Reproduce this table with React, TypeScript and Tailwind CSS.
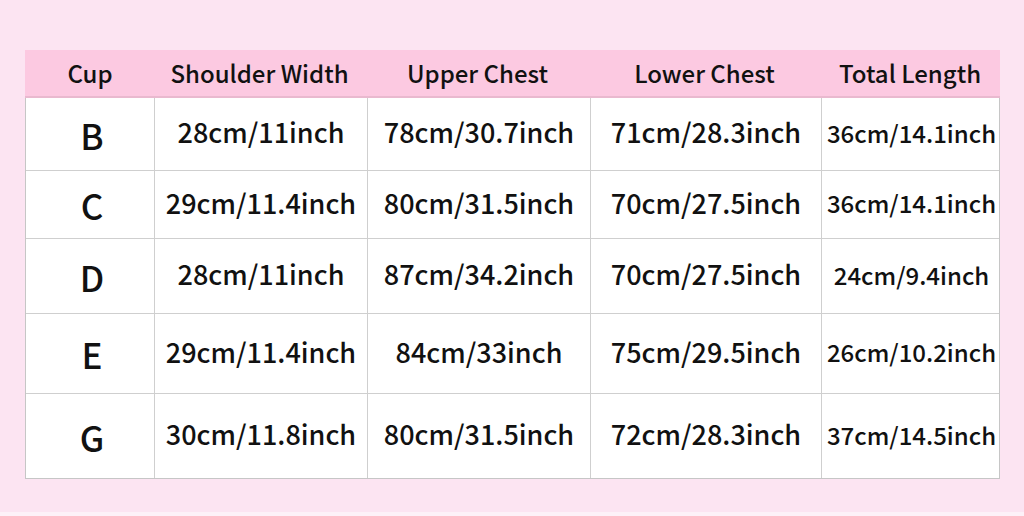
const headers = ["Cup", "Shoulder Width", "Upper Chest", "Lower Chest", "Total Length"];

const rows = [
  { h: "h-[72px]", cells: ["B", "28cm/11inch", "78cm/30.7inch", "71cm/28.3inch", "36cm/14.1inch"] },
  { h: "h-[68px]", cells: ["C", "29cm/11.4inch", "80cm/31.5inch", "70cm/27.5inch", "36cm/14.1inch"] },
  { h: "h-[75px]", cells: ["D", "28cm/11inch", "87cm/34.2inch", "70cm/27.5inch", "24cm/9.4inch"] },
  { h: "h-[80px]", cells: ["E", "29cm/11.4inch", "84cm/33inch", "75cm/29.5inch", "26cm/10.2inch"] },
  { h: "h-[85px]", cells: ["G", "30cm/11.8inch", "80cm/31.5inch", "72cm/28.3inch", "37cm/14.5inch"] },
];

// column widths, left to right
const cols = "grid-cols-[128px_213px_223px_231px_180px]";

function cellText(i: number) {
  if (i === 0) return "text-[35px] pt-[2px] pl-[4px]";
  if (i === 4) return "text-[24px] pb-[3px]";
  return "text-[27px] pb-[3px]";
}

export default function App() {
  return (
    <div className="flex h-[516px] w-[1024px] flex-col bg-[#fce4f2] font-['Noto_Sans_CJK_SC','Noto_Sans',sans-serif] text-[#111]">
      <div className="flex-1 pl-[25px] pt-[50px]">
        <div className="w-[975px]">
          <div className={`grid ${cols} h-[48px] border-b-2 border-[#e9b9cf] bg-[#fcc9e1]`}>
            {headers.map((h, i) => (
              <div key={h} className={`flex items-center justify-center text-[24px] font-medium ${i === 0 ? "pl-[2px]" : ""}`}>
                {h}
              </div>
            ))}
          </div>
          <div className="border-x border-b border-[#c6c6c6] bg-white">
            {rows.map((r, ri) => (
              <div key={ri} className={`grid ${cols} ${r.h} ${ri > 0 ? "border-t border-[#cfcfcf]" : ""}`}>
                {r.cells.map((c, i) => (
                  <div
                    key={i}
                    className={`flex items-center justify-center font-medium ${cellText(i)} ${i > 0 ? "border-l border-[#cfcfcf]" : ""}`}
                  >
                    {c}
                  </div>
                ))}
              </div>
            ))}
          </div>
        </div>
      </div>
      <div className="h-[4px] bg-[#fdf1f8]" />
    </div>
  );
}
